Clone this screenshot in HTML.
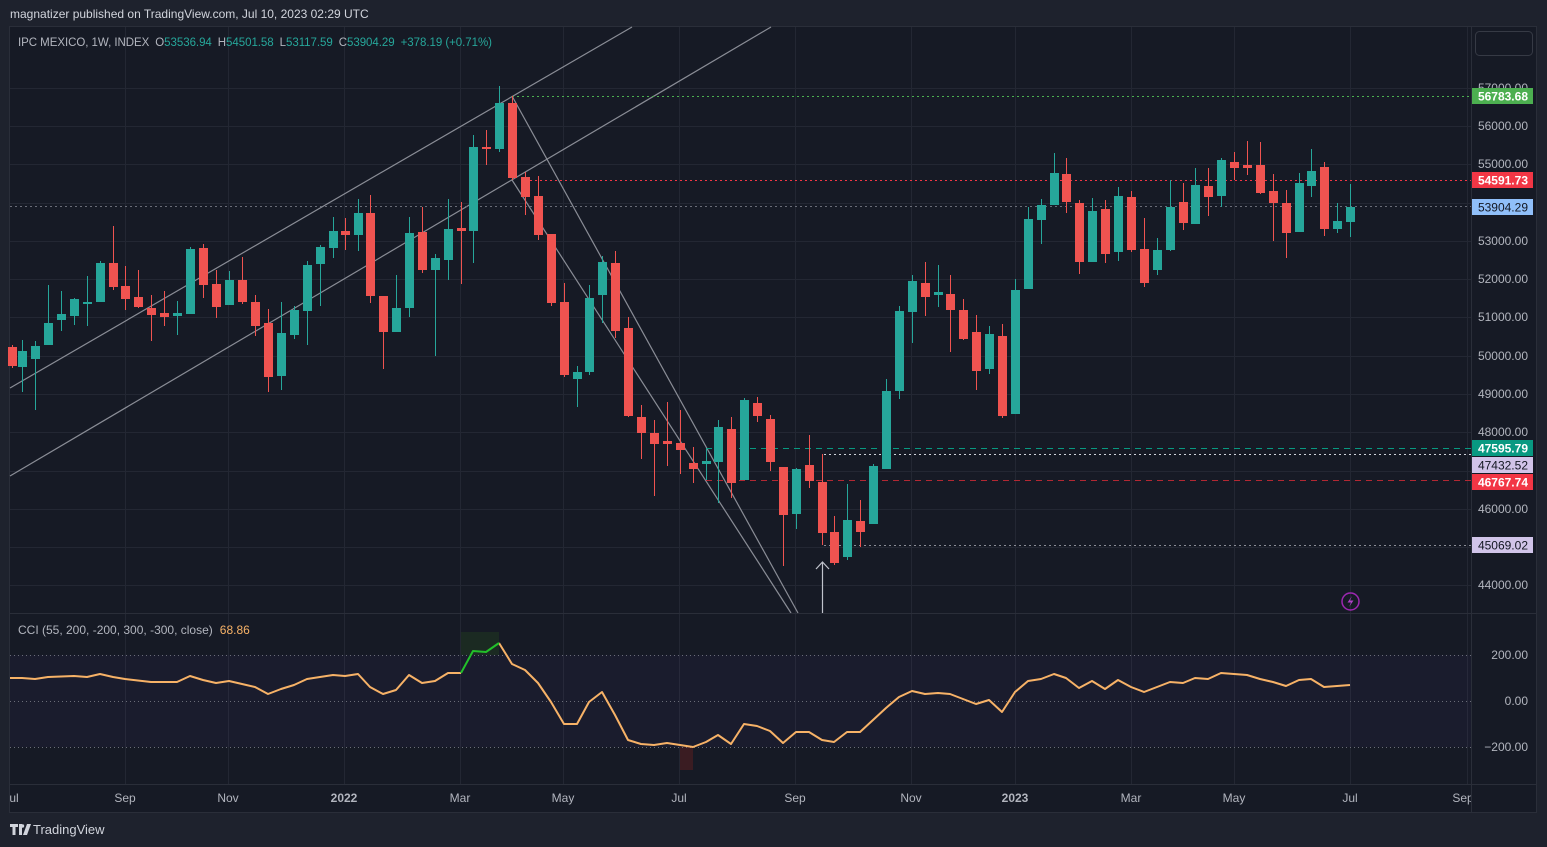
<!DOCTYPE html>
<html><head><meta charset="utf-8">
<style>
html,body{margin:0;padding:0;background:#1e222d;width:1547px;height:847px;overflow:hidden}
svg{display:block;font-family:"Liberation Sans",sans-serif}
text{white-space:pre}
</style></head><body>
<svg id="s" width="1547" height="847" xmlns="http://www.w3.org/2000/svg">
<rect x="0" y="0" width="1547" height="847" fill="#1e222d"/>
<text x="10" y="18" font-size="12" fill="#d1d4dc">magnatizer published on TradingView.com, Jul 10, 2023 02:29 UTC</text>
<rect x="9.5" y="26.5" width="1527" height="786" fill="#161a25" stroke="#2a2e39"/>
<g id="grid" stroke="#232733" stroke-width="1"></g>
<rect x="10" y="655" width="1461" height="92" fill="#7e57c2" fill-opacity="0.05"/>
<rect x="461" y="632" width="38" height="23" fill="#1b2a22"/>
<rect x="680" y="747" width="13" height="23" fill="#3a1c22"/>
<g id="lines" fill="none"></g>
<g id="candles"></g>
<line x1="10" y1="613.5" x2="1536" y2="613.5" stroke="#2a2e39"/>
<line x1="10" y1="784.5" x2="1536" y2="784.5" stroke="#2a2e39"/>
<g id="labels" font-size="12"></g>
<line x1="1471.5" y1="27" x2="1471.5" y2="812" stroke="#2a2e39"/>
<rect x="1475.5" y="31.5" width="57" height="24" rx="4" fill="#161a25" stroke="#363a45"/>
<text x="18" y="46" font-size="11.5" fill="#b2b5be" textLength="474" lengthAdjust="spacing">IPC MEXICO, 1W, INDEX<tspan dx="6">O</tspan><tspan fill="#26a69a">53536.94</tspan><tspan dx="6">H</tspan><tspan fill="#26a69a">54501.58</tspan><tspan dx="6">L</tspan><tspan fill="#26a69a">53117.59</tspan><tspan dx="6">C</tspan><tspan fill="#26a69a">53904.29</tspan><tspan dx="6" fill="#26a69a">+378.19 (+0.71%)</tspan></text>
<text x="18" y="634" font-size="12" fill="#b2b5be">CCI (55, 200, -200, 300, -300, close)<tspan dx="7" fill="#f7b267">68.86</tspan></text>
<circle cx="1350.5" cy="601.5" r="8.5" fill="none" stroke="#9c27b0" stroke-width="1.5"/>
<path d="M1352 596 L1347.5 602.5 L1351 602.5 L1349 607 L1353.5 600.5 L1350 600.5 Z" fill="#b040c8"/>
<g transform="translate(10,823)"><path d="M0 1h8v3H5.5v8H2.5V4H0z M9 1h3v11H9z" fill="#d1d4dc"/><path d="M13 12 L17 1 H21 L17 12 Z" fill="#d1d4dc"/><circle cx="12.5" cy="3" r="1.7" fill="#d1d4dc"/></g>
<text x="33" y="834" font-size="13" fill="#d1d4dc">TradingView</text>
</svg>
<script>
const NS="http://www.w3.org/2000/svg";
function el(p,t,a,txt){const e=document.createElementNS(NS,t);for(const k in a)e.setAttribute(k,a[k]);if(txt!==undefined)e.textContent=txt;document.getElementById(p).appendChild(e);return e;}
const gy=[88,126,164,203,241,279,317,356,394,432,471,509,547,585];
gy.forEach(y=>el("grid","line",{x1:10,x2:1471,y1:y+.5,y2:y+.5}));
const gx=[125,228,344,460,563,679,795,911,1015,1131,1234,1350,1467];
gx.forEach(x=>el("grid","line",{x1:x+.5,x2:x+.5,y1:27,y2:784}));
[655,701,747].forEach(y=>el("lines","line",{x1:10,x2:1471,y1:y+.5,y2:y+.5,stroke:"#6a6d78","stroke-dasharray":"1 3"}));
const L=(x1,y1,x2,y2,c,w,d)=>el("lines","line",{x1,y1,x2,y2,stroke:c,"stroke-width":w||1,"stroke-dasharray":d||"none"});
L(10,388,632,27,"#8a8d96",1.2);
L(10,476,771,27,"#8a8d96",1.2);
L(512,96,798,613,"#8a8d96",1.2);
L(512,180,791,613,"#8a8d96",1.2);
L(512,96.5,1471,96.5,"#4caf50",1,"2 3");
L(525,180.5,1471,180.5,"#f23645",1,"2 3");
L(10,206.5,1471,206.5,"#6a6d78",1,"2 3");
L(706,448.5,1471,448.5,"#089981",1,"6 5");
L(824,454.5,1471,454.5,"#d1d4dc",1,"2 3");
L(706,480.5,1471,480.5,"#b22833",1,"6 5");
L(824,545.5,1471,545.5,"#8a8d96",1,"2 3");
L(822.5,613,822.5,563,"#c0c3cc",1.2);
el("lines","path",{d:"M816 569 L822.5 562 L829 569",stroke:"#c0c3cc","stroke-width":1.2});
const C=[[12,347,366,345,368,"R"],[22,351,367,340,392,"G"],[35,346,359,341,410,"G"],[48,323,345,285,345,"G"],[61,314,320,291,331,"G"],[74,299,316,298,325,"G"],[87,302,304,276,326,"G"],[100,263,302,261,302,"G"],[113,263,287,226,290,"R"],[125,286,299,266,310,"R"],[138,297,307,270,308,"R"],[151,308,315,295,341,"R"],[164,313,317,291,326,"R"],[177,313,316,301,335,"G"],[190,249,314,247,314,"G"],[203,248,285,244,298,"R"],[216,284,307,270,318,"R"],[229,280,305,271,305,"G"],[242,280,302,257,304,"R"],[255,302,326,295,336,"R"],[268,323,377,309,392,"R"],[281,333,376,302,390,"G"],[294,310,335,306,339,"G"],[307,265,311,261,345,"G"],[320,247,264,245,306,"G"],[333,231,248,217,258,"G"],[345,231,235,218,250,"R"],[358,213,235,199,251,"G"],[370,213,296,195,303,"R"],[383,296,332,296,369,"R"],[396,308,332,275,332,"G"],[409,233,308,217,317,"G"],[422,232,270,207,273,"R"],[435,258,270,254,356,"G"],[448,229,260,199,280,"G"],[461,228,231,202,284,"R"],[473,147,231,135,263,"G"],[486,147,149,130,165,"R"],[499,103,149,86,152,"G"],[512,103,178,96,180,"R"],[525,177,197,172,215,"R"],[538,196,235,176,240,"R"],[551,234,303,234,306,"R"],[564,302,375,283,377,"R"],[577,372,379,366,407,"G"],[589,298,372,285,375,"G"],[602,262,295,256,323,"G"],[615,263,331,251,338,"R"],[628,328,416,317,417,"R"],[641,417,433,405,459,"R"],[654,433,444,420,496,"R"],[667,441,444,402,466,"R"],[680,443,450,410,474,"R"],[693,463,469,447,483,"R"],[706,461,464,448,480,"G"],[718,427,462,420,503,"G"],[731,429,483,417,498,"R"],[744,400,480,398,480,"G"],[757,403,416,397,422,"R"],[770,419,462,415,471,"R"],[783,467,515,467,566,"R"],[796,469,514,468,529,"G"],[809,465,481,435,488,"R"],[822,482,533,454,545,"R"],[834,532,563,516,565,"R"],[847,520,557,484,560,"G"],[860,521,532,500,547,"R"],[873,466,524,464,524,"G"],[886,391,469,379,469,"G"],[899,311,391,306,399,"G"],[912,281,312,275,343,"G"],[925,283,297,262,316,"R"],[938,292,295,265,307,"G"],[950,294,310,275,352,"R"],[963,310,339,299,340,"R"],[976,332,371,315,390,"R"],[989,334,369,326,374,"G"],[1002,336,416,324,418,"R"],[1015,290,414,279,414,"G"],[1028,219,289,207,289,"G"],[1041,205,220,199,244,"G"],[1054,173,205,153,205,"G"],[1066,174,202,158,213,"R"],[1079,203,262,200,274,"R"],[1092,211,262,198,262,"G"],[1105,209,254,200,263,"R"],[1118,196,252,187,261,"G"],[1131,197,250,191,252,"R"],[1144,249,283,218,287,"R"],[1157,250,270,238,275,"G"],[1170,207,250,180,251,"G"],[1183,202,223,183,230,"R"],[1195,185,224,168,224,"G"],[1208,186,197,168,216,"R"],[1221,160,196,158,207,"G"],[1234,162,168,152,180,"R"],[1247,165,168,141,175,"R"],[1260,165,193,142,194,"R"],[1273,191,203,174,241,"R"],[1286,203,233,190,258,"R"],[1299,183,232,173,232,"G"],[1311,171,186,149,197,"G"],[1324,167,229,162,236,"R"],[1337,221,229,203,233,"G"],[1350,207,222,184,237,"G"]];
C.forEach(c=>{const col=c[5]=="G"?"#26a69a":"#ef5350";const x=c[0];
 el("candles","rect",{x:x,y:c[3],width:1,height:Math.max(1,c[4]-c[3]),fill:col});
 el("candles","rect",{x:x-4,y:c[1],width:9,height:Math.max(2,c[2]-c[1]),fill:col});});
const P=[[10,678],[22,678],[35,679],[48,677],[74,676],[87,677],[100,674],[113,677],[125,679],[151,682],[177,682],[190,676],[203,680],[216,683],[229,681],[242,684],[255,687],[268,694],[281,689],[294,685],[307,679],[320,677],[333,675],[345,676],[358,674],[370,687],[383,694],[396,690],[409,675],[422,683],[435,681],[448,673],[461,673]];
const G=[[461,673],[473,651],[486,652],[499,643]];
const Q=[[499,643],[512,664],[525,670],[538,683],[551,702],[564,724],[577,724],[589,702],[602,692],[615,715],[628,740],[641,744],[654,745],[667,743],[680,745],[693,747],[706,742],[718,735],[731,744],[744,724],[757,726],[770,731],[783,743],[796,732],[809,732],[822,740],[834,742],[847,732],[860,732],[873,720],[886,708],[899,697],[912,691],[925,694],[938,693],[950,694],[963,699],[976,704],[989,700],[1002,712],[1015,692],[1028,681],[1041,679],[1054,674],[1066,678],[1079,688],[1092,681],[1105,689],[1118,680],[1131,687],[1144,692],[1157,687],[1170,682],[1183,683],[1195,678],[1208,679],[1221,673],[1234,674],[1247,675],[1260,679],[1273,682],[1286,686],[1299,680],[1311,679],[1324,687],[1337,686],[1350,685]];
const pl=(a,c)=>el("lines","polyline",{points:a.map(p=>p.join(",")).join(" "),stroke:c,"stroke-width":2,"stroke-linejoin":"round"});
pl(P,"#f7b267");pl(Q,"#f7b267");pl(G,"#22c02a");
const tl=[[14,"ul"],[125,"Sep"],[228,"Nov"],[344,"2022"],[460,"Mar"],[563,"May"],[679,"Jul"],[795,"Sep"],[911,"Nov"],[1015,"2023"],[1131,"Mar"],[1234,"May"],[1350,"Jul"],[1463,"Sep"]];
tl.forEach(t=>el("labels","text",{x:t[0],y:802,"text-anchor":"middle",fill:"#b2b5be","font-weight":t[1].startsWith("20")?"bold":"normal"},t[1]));
el("labels","rect",{x:1472,y:785,width:64,height:27,fill:"#161a25"});
el("labels","rect",{x:0,y:786,width:9,height:24,fill:"#1e222d"});
const pv=[[88,"57000.00"],[126,"56000.00"],[164,"55000.00"],[241,"53000.00"],[279,"52000.00"],[317,"51000.00"],[356,"50000.00"],[394,"49000.00"],[432,"48000.00"],[509,"46000.00"],[585,"44000.00"],[655,"200.00"],[701,"0.00"],[747,"−200.00"]];
pv.forEach(p=>el("labels","text",{x:1528,y:p[0]+4,"text-anchor":"end",fill:"#b2b5be"},p[1]));
const tg=[[96,"56783.68","#4caf50","#fff"],[180,"54591.73","#f23645","#fff"],[207,"53904.29","#90bff9","#131722"],[448,"47595.79","#089981","#fff"],[465,"47432.52","#d1c4e9","#131722"],[482,"46767.74","#f23645","#fff"],[545,"45069.02","#d1c4e9","#131722"]];
tg.forEach(t=>{el("labels","rect",{x:1472,y:t[0]-8,width:61,height:16,fill:t[2]});el("labels","text",{x:1528,y:t[0]+4.5,"text-anchor":"end",fill:t[3],"font-weight":t[3]=="#fff"?"bold":"normal"},t[1]);});
</script>
</body></html>
